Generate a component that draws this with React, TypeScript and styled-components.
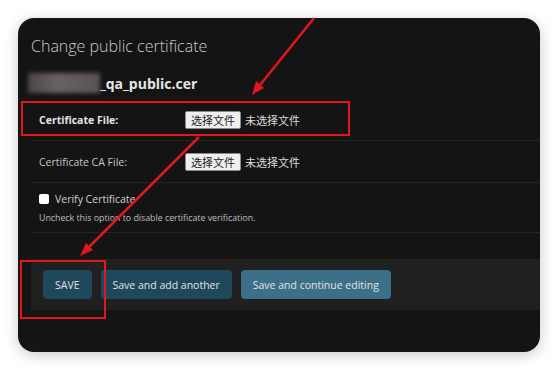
import styled, { createGlobalStyle } from 'styled-components';

const Global = createGlobalStyle`
  html, body {
    margin: 0;
    background: #ffffff;
    font-family: "Open Sans", "Noto Sans CJK SC", sans-serif;
  }
`;

const Page = styled.div`
  position: relative;
  width: 558px;
  height: 370px;
  padding: 18px;
  box-sizing: border-box;
`;

const Card = styled.div`
  width: 522px;
  height: 334px;
  box-sizing: border-box;
  background: #141414;
  border-radius: 16px;
  box-shadow: 0 3px 14px rgba(0, 0, 0, 0.22);
  overflow: hidden;
  padding: 17px 0 0 13px;
`;

const Title = styled.h1`
  margin: 0;
  font-size: 16px;
  line-height: 22px;
  font-weight: 300;
  color: #c9c9c9;
`;

const FileName = styled.div`
  display: flex;
  align-items: center;
  margin: 16px 0 0 -3px;
  height: 20px;
  font-size: 14px;
  font-weight: 700;
  color: #e6e6e6;
`;

const Blurred = styled.span`
  width: 72px;
  height: 20px;
  background: linear-gradient(90deg, #4d4444, #6a6262 40%, #5b5353);
  filter: blur(2px);
`;

const Fieldset = styled.div`
  margin-top: 6px;
`;

const Row = styled.div`
  display: flex;
  align-items: center;
  height: 41px;
  padding: 0 8px;
  border-bottom: 1px solid #252525;
`;

const Label = styled.label<{ $bold?: boolean }>`
  width: 146px;
  font-size: 10.5px;
  font-weight: ${p => (p.$bold ? 700 : 400)};
  color: ${p => (p.$bold ? '#e4e4e4' : '#c6c6c6')};
`;

const FileButton = styled.button`
  height: 18px;
  padding: 0 5px;
  border: 1px solid #8a8a8a;
  border-radius: 2px;
  background: #efefef;
  color: #222;
  font-family: "Noto Sans CJK SC", sans-serif;
  font-size: 11px;
  line-height: 16px;
`;

const NoFile = styled.span`
  margin-left: 4px;
  font-family: "Noto Sans CJK SC", sans-serif;
  font-size: 11px;
  color: #dcdcdc;
`;

const CheckRow = styled.div`
  padding: 9px 8px 8px;
  border-bottom: 1px solid #252525;
`;

const CheckLine = styled.label`
  display: flex;
  align-items: center;
  gap: 6px;
  height: 14px;
  font-size: 10.5px;
  color: #d0d0d0;
`;

const Box = styled.span`
  width: 10px;
  height: 10px;
  background: #ffffff;
  border-radius: 2px;
`;

const Help = styled.div`
  margin-top: 6px;
  line-height: 12px;
  font-size: 8.8px;
  color: #bdbdbd;
`;

const SubmitRow = styled.div`
  display: flex;
  gap: 9px;
  margin-top: 26px;
  padding: 11px 12px;
  background: #202020;
`;

const Button = styled.button<{ $light?: boolean }>`
  height: 29px;
  padding: 0 12px;
  border: 0;
  border-radius: 4px;
  background: ${p => (p.$light ? '#3c6f88' : '#1f485c')};
  color: #e2e2e2;
  font-family: "Open Sans", sans-serif;
  font-size: 10.5px;
`;

const Overlay = styled.svg`
  position: absolute;
  left: 0;
  top: 0;
  pointer-events: none;
`;

function App() {
  return (
    <Page>
      <Global />
      <Card>
        <Title>Change public certificate</Title>
        <FileName>
          <Blurred />
          _qa_public.cer
        </FileName>
        <Fieldset>
          <Row>
            <Label $bold>Certificate File:</Label>
            <FileButton>选择文件</FileButton>
            <NoFile>未选择文件</NoFile>
          </Row>
          <Row>
            <Label>Certificate CA File:</Label>
            <FileButton>选择文件</FileButton>
            <NoFile>未选择文件</NoFile>
          </Row>
          <CheckRow>
            <CheckLine>
              <Box />
              Verify Certificate
            </CheckLine>
            <Help>Uncheck this option to disable certificate verification.</Help>
          </CheckRow>
        </Fieldset>
        <SubmitRow>
          <Button>SAVE</Button>
          <Button>Save and add another</Button>
          <Button $light>Save and continue editing</Button>
        </SubmitRow>
      </Card>
      <Overlay width="558" height="370" viewBox="0 0 558 370">
        <g stroke="#e3161f" strokeWidth="2" fill="none">
          <rect x="22" y="102" width="327" height="33" />
          <rect x="21" y="261" width="84" height="57" />
          <line x1="314" y1="18" x2="260" y2="85" strokeWidth="2.5" />
          <line x1="199" y1="137" x2="89" y2="247" strokeWidth="2.5" />
        </g>
        <g fill="#e3161f">
          <polygon points="252,95 264,88 256,81" />
          <polygon points="80,256 93,250 86,243" />
        </g>
      </Overlay>
    </Page>
  );
}

export default App;
